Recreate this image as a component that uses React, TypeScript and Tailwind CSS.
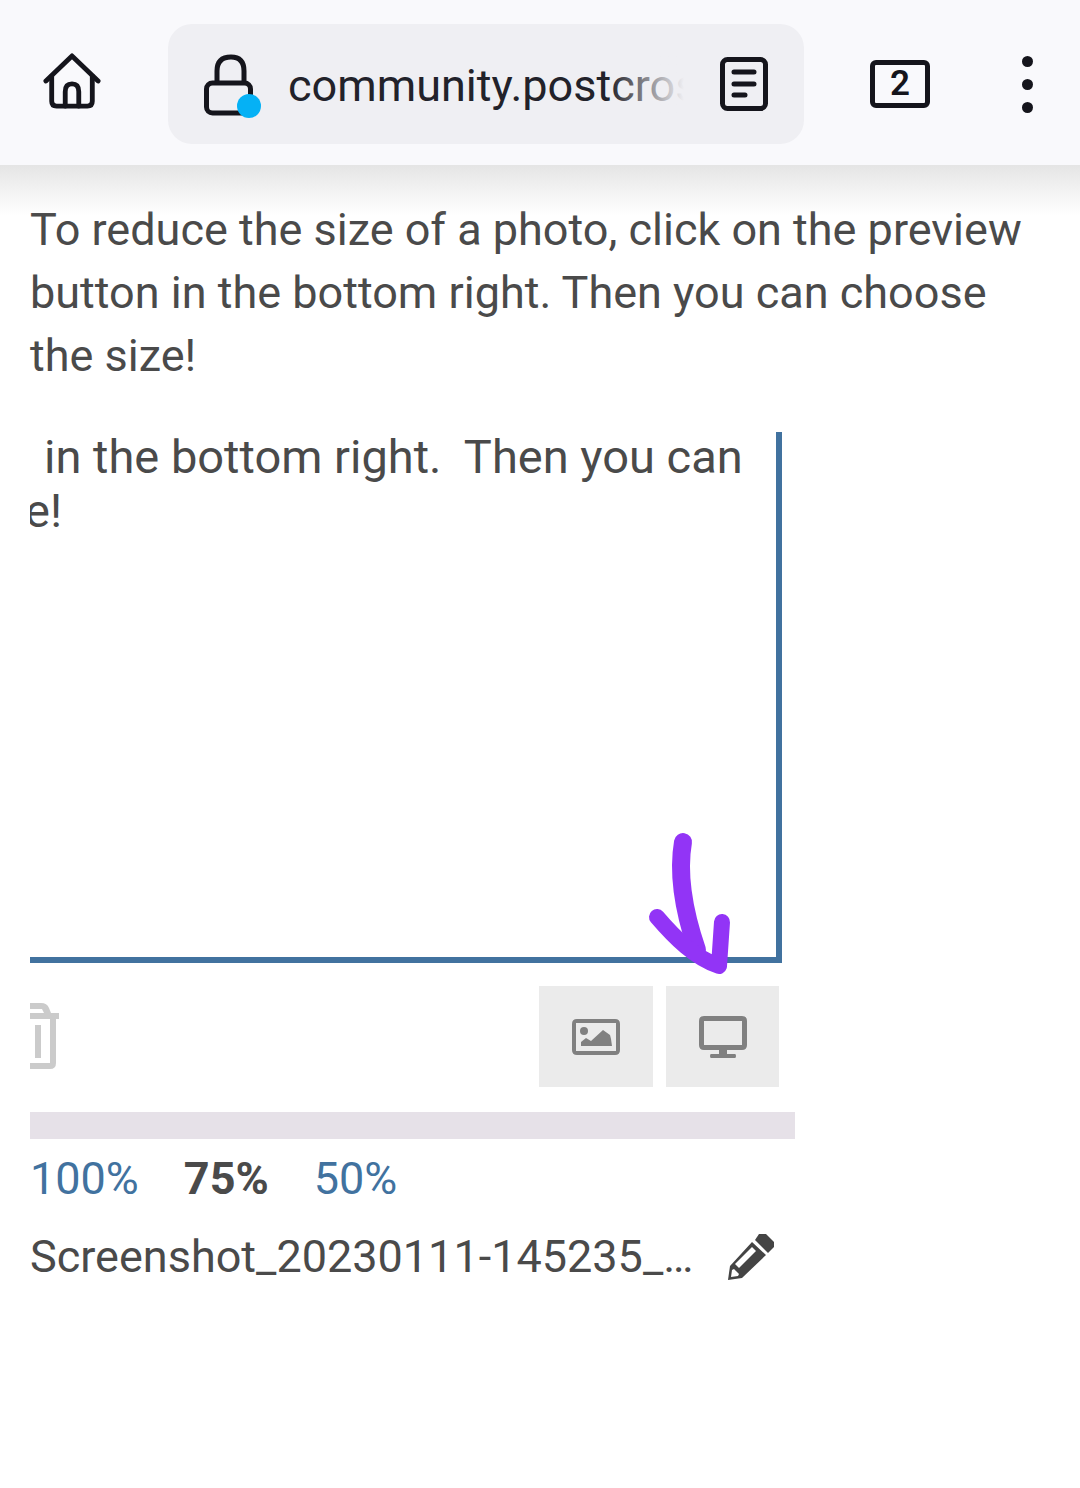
import React from "react";

const ink = "#15151c";

const HomeIcon = () => (
  <svg width="58" height="58" viewBox="0 0 60 60" fill="none" stroke={ink} strokeWidth="5" strokeLinecap="round" strokeLinejoin="round">
    <path d="M3 29 L30 3 L57 29" />
    <path d="M9 24 V50 Q9 55 14 55 H46 Q51 55 51 50 V24" />
    <path d="M23 55 V40 Q23 32 30 32 Q37 32 37 40 V55" />
  </svg>
);

const LockIcon = () => (
  <div className="relative w-[60px] h-[64px] mt-[3px] ml-[2px] -mr-[2px]">
    <svg width="60" height="64" viewBox="0 0 60 64" fill="none" stroke={ink} strokeWidth="5" strokeLinejoin="round">
      <path d="M13 29 V17 Q13 3 27 3 Q40 3 40 17 V29" />
      <rect x="2.5" y="29" width="44" height="30" rx="6" />
    </svg>
    <span className="absolute left-[33px] top-[40px] w-6 h-6 rounded-full bg-[#05b1f5]" />
  </div>
);

const ReaderIcon = () => (
  <svg width="48" height="54" viewBox="0 0 48 54" fill="none" stroke={ink} strokeWidth="5" strokeLinecap="round">
    <rect x="2.5" y="2.5" width="43" height="49" rx="5" />
    <path d="M14 15 H34 M14 27 H34 M14 38 H25" />
  </svg>
);

const TrashIcon = () => (
  <svg width="30" height="66" viewBox="0 0 30 66" fill="#cbcbcb">
    <path d="M0 0 H11 Q17 0 19 5 L21 10 H29 V16 H26 V60 Q26 66 20 66 H0 V60 H20 V16 H0 V10 H14 L12 6 H0 Z" />
    <rect x="5" y="22" width="6" height="33" />
  </svg>
);

const ImageIcon = () => (
  <svg width="48" height="36" viewBox="0 0 48 36" fill="#808080">
    <path d="M5 0 H43 Q48 0 48 5 V31 Q48 36 43 36 H5 Q0 36 0 31 V5 Q0 0 5 0 Z M4 4 V32 H44 V4 Z" fillRule="evenodd" />
    <circle cx="12" cy="12" r="4" />
    <path d="M9 27 V23 L14 19 L19 22 L31 11 L38 16 L39 20 L40 27 Z" />
  </svg>
);

const MonitorIcon = () => (
  <svg width="48" height="42" viewBox="0 0 48 42" fill="#808080">
    <path d="M5 0 H43 Q48 0 48 5 V29 Q48 34 43 34 H5 Q0 34 0 29 V5 Q0 0 5 0 Z M5 5 V29 H43 V5 Z" fillRule="evenodd" />
    <path d="M20 34 H28 V38 H36 Q37 38 37 40 Q37 42 36 42 H12 Q11 42 11 40 Q11 38 12 38 H20 Z" />
  </svg>
);

const PencilIcon = () => (
  <svg width="46" height="46" viewBox="0 0 46 46" fill="#444444">
    <path d="M31 0 L38 0 L46 8 L46 13 L40 19 L27 6 Z" />
    <path d="M24 8 L38 21 L14 44 L0 46 L2 32 Z M24 13 L7 30 L11 34 L28 17 Z M4 36 L3 43 L10 42 L11 40 L6 35 Z" fillRule="evenodd" />
  </svg>
);

export default function App() {
  return (
    <div className="relative w-[1080px] h-[1488px] overflow-hidden bg-white font-['Roboto',sans-serif] text-[#4a4a4a]">
      <header className="flex items-start h-[165px] bg-[#f9f9fc]">
        <div className="w-[168px] pl-[43px] mt-[53px]">
          <HomeIcon />
        </div>
        <div className="flex items-center w-[636px] h-[120px] mt-[24px] rounded-[24px] bg-[#efeff3] pl-[34px]">
          <LockIcon />
          <div className="relative w-[396px] ml-[26px] mt-[4px] overflow-hidden whitespace-nowrap text-[45px] leading-[60px] text-[#22222a]">
            community.postcross
            <span className="absolute inset-y-0 right-0 w-[75px] bg-gradient-to-r from-transparent to-[#efeff3]" />
          </div>
          <div className="ml-[36px]">
            <ReaderIcon />
          </div>
        </div>
        <div className="flex items-center justify-center ml-[66px] mt-[60px] w-[60px] h-[48px] rounded-[6px] border-[5px] border-[#15151c] text-[35px] font-semibold text-[#15151c]">
          2
        </div>
        <div className="flex flex-col gap-[12px] ml-[92px] mt-[56px]">
          <span className="w-[11px] h-[11px] rounded-full bg-[#15151c]" />
          <span className="w-[11px] h-[11px] rounded-full bg-[#15151c]" />
          <span className="w-[11px] h-[11px] rounded-full bg-[#15151c]" />
        </div>
      </header>

      <div className="absolute left-0 top-[165px] w-full h-[50px] bg-gradient-to-b from-[#e5e5e5] to-transparent" />

      <main className="pl-[30px] pt-[33px]">
        <p className="w-[1000px] text-[45px] leading-[63px]">
          To reduce the size of a photo, click on the preview button in the bottom right. Then you can choose the size!
        </p>

        <div className="w-[752px] h-[531px] mt-[45px] border-r-[6px] border-b-[6px] border-[#41729f] text-[47px] leading-[54px] overflow-hidden">
          <div className="pl-[14px] -mt-[2px] whitespace-pre">in the bottom right.  Then you can</div>
          <div className="-ml-[5px]">e!</div>
        </div>

        <div className="flex items-start justify-between w-[749px] mt-[23px]">
          <div className="pt-[17px]">
            <TrashIcon />
          </div>
          <div className="flex gap-[13px]">
            <div className="flex items-center justify-center w-[114px] h-[101px] bg-[#ebebeb]">
              <ImageIcon />
            </div>
            <div className="flex items-center justify-center w-[113px] h-[101px] bg-[#ebebeb]">
              <MonitorIcon />
            </div>
          </div>
        </div>

        <div className="w-[765px] h-[27px] mt-[25px] bg-[#e6e1e8]" />

        <div className="flex gap-[45px] mt-[13px] text-[45px] leading-[54px]">
          <span className="text-[#41729f]">100%</span>
          <span className="font-bold">75%</span>
          <span className="text-[#41729f]">50%</span>
        </div>

        <div className="flex items-center mt-[24px] text-[45px] leading-[54px]">
          <span className="w-[698px] whitespace-nowrap">Screenshot_20230111-145235_…</span>
          <PencilIcon />
        </div>
      </main>

      <svg className="absolute left-[640px] top-[826px]" width="100" height="155" viewBox="0 0 100 155" fill="none" stroke="#9234f6" strokeWidth="18" strokeLinecap="round" strokeLinejoin="round">
        <path d="M43 16 C38 45 42 80 57 124" />
        <path d="M17 91 C35 112 55 132 79 140 L82 96" strokeWidth="16" />
      </svg>
    </div>
  );
}
